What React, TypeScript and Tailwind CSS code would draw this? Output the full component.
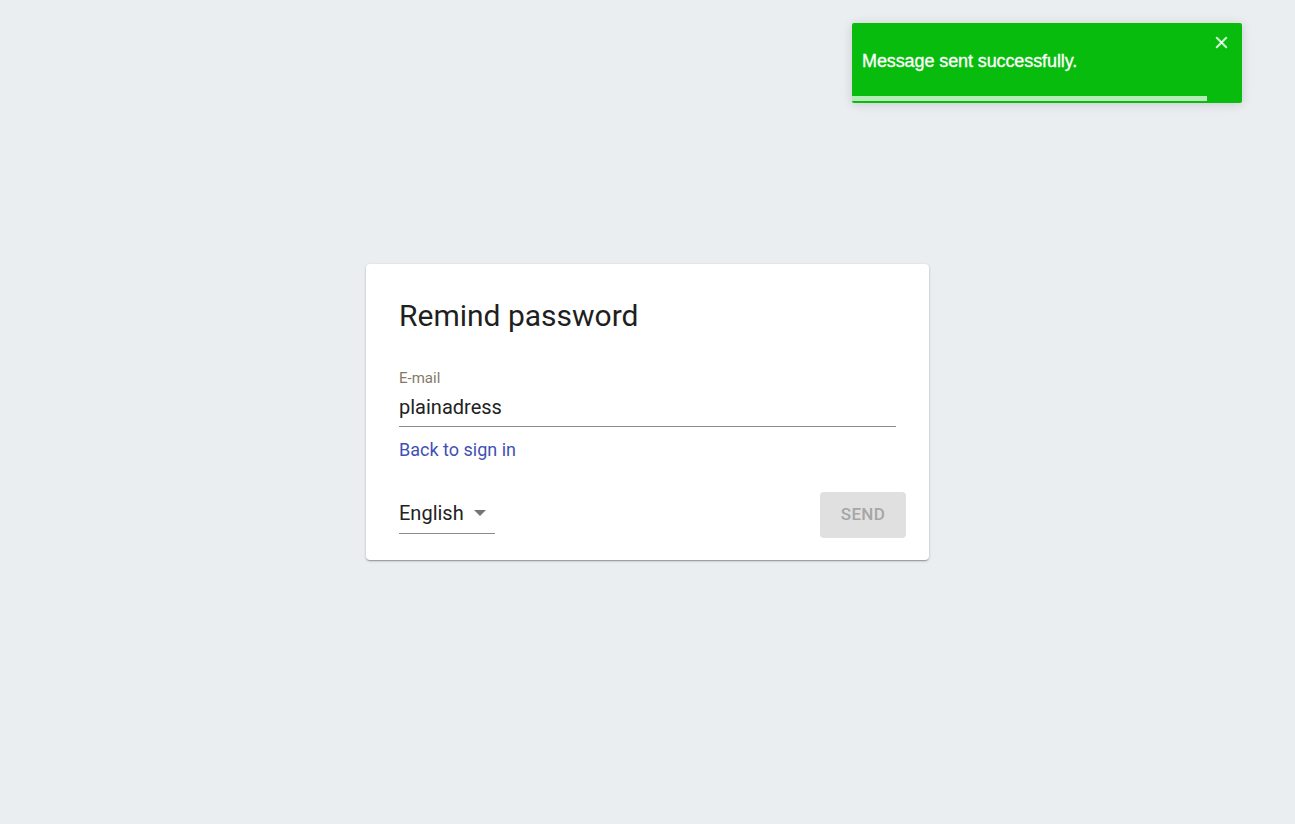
import { X } from "lucide-react";

export default function App() {
  return (
    <div className="relative min-h-[824px] w-full bg-[#eaeef1] font-['Roboto',sans-serif]">
      {/* toast */}
      <div className="absolute left-[852px] top-[23px] w-[390px] h-[80px] rounded-[2px] bg-[#07bc0c] shadow-[0_1px_10px_rgba(0,0,0,0.1),0_2px_15px_rgba(0,0,0,0.05)] overflow-hidden">
        <div className="flex h-full items-start justify-between pl-[10px] pr-[11px]">
          <p className="mt-[27px] font-['Liberation_Sans',Arial,sans-serif] text-[18px] leading-[22px] tracking-[-0.1px] text-white [-webkit-text-stroke:0.3px_white]">
            Message sent successfully.
          </p>
          <button className="mt-[10px] text-white/80">
            <X size={19} strokeWidth={2.6} />
          </button>
        </div>
        <div className="absolute left-0 bottom-[2px] h-[5px] w-[355px] bg-white/70" />
      </div>

      {/* card */}
      <div className="flex justify-center pt-[264px]">
        <div className="w-[563px] rounded-[4px] bg-white pl-[33px] pr-[23px] pt-[33px] pb-[22px] shadow-[0_1px_3px_rgba(0,0,0,0.2),0_1px_1px_rgba(0,0,0,0.14),0_2px_1px_-1px_rgba(0,0,0,0.12)]">
          <h1 className="text-[30px] leading-[38px] text-[#1f1f1f]">Remind password</h1>

          <div className="mt-[35px] mr-[10px]">
            <label className="block text-[15px] leading-[16px] text-[#857a68]">E-mail</label>
            <div className="border-b border-[#8c8c8c] pb-[7px] pt-[9px] text-[20px] leading-[24px] text-[#222]">
              plainadress
            </div>
          </div>

          <a className="mt-[11px] block text-[18px] leading-[24px] text-[#3f51b5]">Back to sign in</a>

          <div className="mt-[30px] flex items-end justify-between">
            <div className="mb-[4px] flex w-[96px] items-center border-b border-[#8c8c8c] pt-[6px] pb-[8px]">
              <span className="text-[20px] leading-[24px] text-[#222]">English</span>
              <svg className="ml-[9px]" width="14" height="7" viewBox="0 0 14 7">
                <path d="M1 0 L7 6 L13 0 Z" fill="#757575" />
              </svg>
            </div>
            <button className="h-[46px] w-[86px] rounded-[4px] bg-[#e0e0e0] text-[17px] font-medium tracking-[0.3px] text-[#a6a6a6]">
              SEND
            </button>
          </div>
        </div>
      </div>
    </div>
  );
}
